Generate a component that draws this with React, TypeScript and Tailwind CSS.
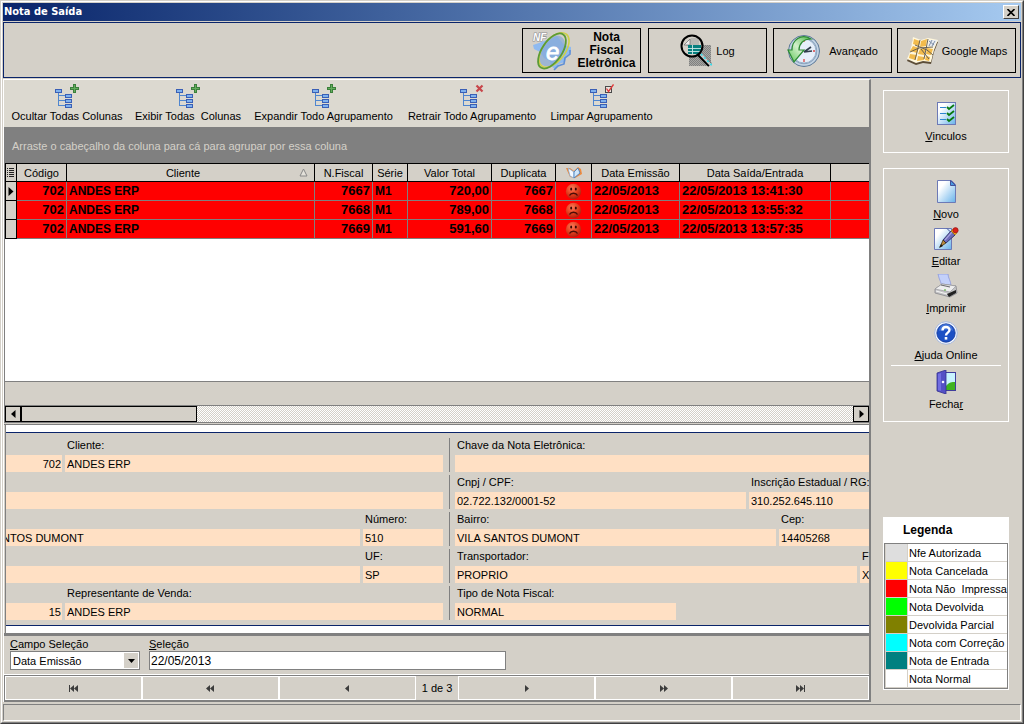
import React from "react";

const FONT = "font-['Liberation_Sans',Arial,sans-serif]";

function TreeIcon({ mark }: { mark: "plus" | "cross" | "check" }) {
  return (
    <svg width="24" height="24" viewBox="0 0 24 24" shapeRendering="crispEdges" aria-hidden="true">
      <path d="M3.500 8v14M3 11.500h7M3 16.500h7M3 21.500h7" stroke="#4f86cf" fill="none" />
      {[
        [0, 5],
        [10, 10],
        [10, 15],
        [10, 20],
      ].map(([x, y]) => (
        <g key={`${x}-${y}`}>
          <rect x={x} y={y} width="7" height="4" fill="#3a5fb5" />
          <rect x={x + 1} y={y + 1} width="5" height="2" fill="#7fb2ee" />
        </g>
      ))}
      {mark === "plus" && (
        <>
          <path d="M18 0h3v3h3v3h-3v3h-3v-3h-3v-3h3z" fill="#3b7f3b" />
          <path d="M19 1h1v3h3v1h-3v3h-1v-3h-3v-1h3z" fill="#63ad5c" />
        </>
      )}
      {mark === "cross" && (
        <path
          d="M16.500 1.500L22.500 7.500M22.500 1.500L16.500 7.500"
          stroke="#c8474b"
          strokeWidth="2.200"
          shapeRendering="auto"
        />
      )}
      {mark === "check" && (
        <>
          <rect x="15.500" y="2.500" width="6" height="6" fill="#e8e4dc" stroke="#4a4a4a" />
          <path d="M16.500 4.500l2 3L23.500 0.500" stroke="#e03a3a" strokeWidth="1.300" fill="none" shapeRendering="auto" />
        </>
      )}
    </svg>
  );
}

function NfeIcon() {
  return (
    <svg width="40" height="40" viewBox="0 0 40 40" aria-hidden="true">
      <path d="M1 14l6-2 5-2 5-2 8-3 4 5 3 4 7 2v5l-5 4-1 6-6 2-4 5-4-3-1-5-6-3-4-6-6-3z" fill="#8fbaf0" />
      <path d="M38 19v4l-5 4-1 6-6 2-4 4" fill="none" stroke="#5f8fd6" strokeWidth="1.600" />
      <ellipse cx="20" cy="20" rx="11" ry="17" transform="rotate(33 20 20)" fill="#86a9d6" opacity="0.700" />
      <ellipse cx="22" cy="19" rx="11" ry="20" transform="rotate(38 22 19)" fill="none" stroke="#cfd04a" strokeWidth="1.600" />
      <ellipse cx="20" cy="20" rx="10" ry="20" transform="rotate(34 20 20)" fill="none" stroke="#5c9b35" strokeWidth="1.800" />
      <text x="14" y="29" fontSize="24" fontStyle="italic" fill="#fff" stroke="#fff" strokeWidth="0.800" fontFamily="Liberation Sans, sans-serif">
        e
      </text>
      <text
        x="1"
        y="10"
        fontSize="10"
        fontStyle="italic"
        fontWeight="bold"
        fill="#fff"
        stroke="#8f8f93"
        strokeWidth="1.200"
        paintOrder="stroke"
        fontFamily="Liberation Sans, sans-serif"
      >
        NF
      </text>
    </svg>
  );
}

function LogIcon() {
  return (
    <svg width="32" height="33" viewBox="0 0 32 33" aria-hidden="true">
      <defs>
        <pattern id="log-dither" width="2" height="2" patternUnits="userSpaceOnUse">
          <rect width="2" height="2" fill="#a8a8a4" />
          <path d="M0 0h1v1h-1zM1 1h1v1h-1z" fill="#808080" />
        </pattern>
      </defs>
      <path d="M19 11h12v21H9V22h10z" fill="url(#log-dither)" />
      <circle cx="12" cy="12" r="10.500" fill="#d4d0c8" />
      <path d="M11 4h8v8H6z" fill="#b8b8b4" />
      <path d="M4 11l6-6v6z" fill="#eee" stroke="#777" strokeWidth="0.800" />
      <path d="M8 11h13v9H8z" fill="#067f7f" />
      <path d="M8 14.500h13M8 17.500h13M12.500 11v9" stroke="#c9e8e6" strokeWidth="0.900" />
      <circle cx="12" cy="12" r="10.500" fill="none" stroke="#000" strokeWidth="2" />
      <path d="M19 20l11 11" stroke="#000" strokeWidth="5" />
      <path d="M20.500 20l11 11.500" stroke="#c8c8c8" strokeWidth="2.800" />
      <path d="M21 20l11 11.500" stroke="#2fdcea" strokeWidth="1.600" strokeDasharray="2 2.500" />
    </svg>
  );
}

function HistoryIcon() {
  return (
    <svg width="34" height="34" viewBox="0 0 34 34" aria-hidden="true">
      <defs>
        <linearGradient id="clock-arrow" x1="1" y1="0" x2="0" y2="1">
          <stop offset="0" stopColor="#4bb845" />
          <stop offset="0.500" stopColor="#d2f0cb" />
          <stop offset="1" stopColor="#5cc455" />
        </linearGradient>
      </defs>
      <circle cx="17" cy="17" r="15.500" fill="#8ba3bd" stroke="#5f7a98" />
      <circle cx="17" cy="17" r="14" fill="none" stroke="#c4d5e6" strokeWidth="1.500" />
      <circle cx="17" cy="17" r="12" fill="#e6effa" stroke="#9db4cc" />
      <path d="M17 18l7-5M17 18l8-1" stroke="#2f3d4c" strokeWidth="1.700" />
      <path d="M17 6v2M28 17h-2M17 28v-3" stroke="#d44" strokeWidth="1.300" />
      <path d="M24 5C14-1 5 6 5 16H1l6 12 10-12h-5c0-6 4-11 12-11z" fill="url(#clock-arrow)" stroke="#2c8a34" strokeWidth="1.200" />
    </svg>
  );
}

function MapIcon() {
  return (
    <svg width="33" height="28" viewBox="0 0 33 28" aria-hidden="true">
      <path d="M7 2l8 3 7-2 10 2-4 10-3 12-8-1-7 2-9-4 3-7z" fill="#5c4d38" />
      <path d="M7 0l8 3 7-2 10 2-4 10-3 12-8-1-7 2-9-4 3-7z" fill="#fff7dc" />
      <path
        d="M8 2l6 2-1 5-6-2zM7 9l6 2-2 5-7-2zM15 4l6-2-1 7-6 1zM14 12l6-1-2 7-6-1zM4 17l7 1-2 5-6-2zM21 11l6 1-2 6-5-1zM12 19l6 1v3l-7 1zM20 19l4 1-1 4-4-1z"
        fill="#f2bb4c"
      />
      <path d="M23 3h8l-3 7-6-1z" fill="#e8ecf2" />
      <path d="M9 8l12 5 6 5M14 3l-5 20M22 2l-4 20M4 15l9-4 14-1M15 12l8 10" stroke="#5b5548" strokeWidth="0.900" fill="none" />
      <path d="M23 4l5 4M26 3l-3 6M29 4l-3 5" stroke="#7788a0" strokeWidth="0.900" />
    </svg>
  );
}

function SheetDefs() {
  return (
    <linearGradient id="sheet" x1="0" y1="0" x2="1" y2="1">
      <stop offset="0.250" stopColor="#fff" />
      <stop offset="1" stopColor="#67b2ea" />
    </linearGradient>
  );
}

function LinksIcon() {
  return (
    <svg width="24" height="24" viewBox="0 0 24 24" aria-hidden="true">
      <defs>
        <SheetDefs />
      </defs>
      <rect x="3.500" y="0.500" width="18" height="22" fill="url(#sheet)" stroke="#6c79b6" />
      <path d="M6 5.500h6M6 11.500h6M6 17.500h6" stroke="#2d86d0" />
      <path d="M13 5l2 2 5-4M13 11l2 2 5-4M13 17l2 2 5-4" fill="none" stroke="#087a10" strokeWidth="1.800" />
    </svg>
  );
}

function NewIcon() {
  return (
    <svg width="24" height="24" viewBox="0 0 24 24" aria-hidden="true">
      <path d="M3.500 0.500h14l4 4v18h-18z" fill="url(#sheet)" stroke="#6c79b6" />
      <path d="M16.500 0.500l5 5h-5z" fill="#4a9ae0" stroke="#44529b" />
    </svg>
  );
}

function EditIcon() {
  return (
    <svg width="26" height="24" viewBox="0 0 26 24" aria-hidden="true">
      <path d="M1.500 1.500h17v21h-17z" fill="url(#sheet)" stroke="#6c79b6" />
      <path d="M14 1.500l4 4" stroke="#44529b" />
      <path d="M10 13l8-9 4 4-9 8z" fill="#6d6ab8" stroke="#35356e" />
      <path d="M12 13l7-8" stroke="#a5a3e0" strokeWidth="1.200" />
      <path d="M10 13l3 3-6 4z" fill="#b9893c" stroke="#2d220f" strokeWidth="0.700" />
      <path d="M6 21l2-4 2 2z" fill="#221a0c" />
      <path d="M18 4l2-2 4 4-2 2z" fill="#f5b51d" stroke="#9a6a10" strokeWidth="0.600" />
      <circle cx="22.500" cy="3.300" r="2.700" fill="#d9201a" stroke="#8e1410" strokeWidth="0.600" />
    </svg>
  );
}

function PrintIcon() {
  return (
    <svg width="24" height="24" viewBox="0 0 24 24" aria-hidden="true">
      <path d="M4 0h10c0 4 3 7 3 12l-9 2c0-5-3-8-4-14z" fill="#c3d0fa" stroke="#8b98dc" strokeWidth="0.800" />
      <path d="M1 15l7-5 14 2 1 7-7 4-15-4z" fill="#c4c4c6" stroke="#85858a" strokeWidth="0.800" />
      <path d="M1 15l7-5 14 2-6 6z" fill="#ededee" stroke="#909094" strokeWidth="0.600" />
      <path d="M7 11l9 2" stroke="#6b6b70" strokeWidth="1.200" />
      <path d="M13 20l9-4v3l-7 4z" fill="#222" />
      <path d="M2 17l11 3" stroke="#f5f5f5" />
      <path d="M10 16h2" stroke="#4fae35" strokeWidth="1.200" />
    </svg>
  );
}

function HelpIcon() {
  return (
    <svg width="24" height="24" viewBox="0 0 24 24" aria-hidden="true">
      <circle cx="12" cy="12" r="11.300" fill="#f3f7ff" stroke="#a7b8da" />
      <circle cx="12" cy="12" r="9.200" fill="#1c50c4" stroke="#12399b" strokeWidth="0.800" />
      <path d="M5 10a7 7 0 0 1 14 0c-4-2-9-1-14 0z" fill="#5c8ae6" opacity="0.600" />
      <path d="M8.500 9.500c0-4.500 7-4.500 7-0.500 0 2.700-3.500 2.500-3.500 5.500" fill="none" stroke="#fff" strokeWidth="2.400" />
      <rect x="10.700" y="16" width="2.600" height="2.600" fill="#fff" />
    </svg>
  );
}

function DoorIcon() {
  return (
    <svg width="24" height="24" viewBox="0 0 24 24" aria-hidden="true">
      <rect x="10.500" y="2.500" width="11" height="18" fill="#c8f3ff" stroke="#3f3d9c" />
      <path d="M12 16c3-4 6-4 9-4v8h-9z" fill="#3fb321" />
      <path d="M3 3l9-3v24l-9-3z" fill="#5450c6" stroke="#343091" strokeWidth="0.800" />
      <path d="M4 4l3-1v18l-3-1z" fill="#716de0" />
      <circle cx="9" cy="12" r="1.300" fill="#f2f2ff" />
    </svg>
  );
}

function BookIcon() {
  return (
    <svg className="mx-auto block" width="18" height="13" viewBox="0 0 18 13" role="img" aria-label="Impressa">
      <path d="M1 2h4l4 3 4-4 3 2 1 5-7 4-5-1z" fill="#f08a3c" />
      <path d="M3 2l6 4v6l-4-2z" fill="#f4f9ff" stroke="#79a9d8" strokeWidth="0.700" />
      <path d="M9 6l4-4 2 5-6 5z" fill="#cfe6fa" stroke="#4a82c0" strokeWidth="0.900" />
    </svg>
  );
}

function SadIcon() {
  return (
    <svg className="mx-auto block" width="17" height="17" viewBox="0 0 17 17" role="img" aria-label="Não impressa">
      <defs>
        <radialGradient id="sad" cx="0.400" cy="0.300" r="0.700">
          <stop offset="0" stopColor="#ff7a58" />
          <stop offset="0.600" stopColor="#e03c1c" />
          <stop offset="1" stopColor="#b02010" />
        </radialGradient>
      </defs>
      <circle cx="8.500" cy="8.500" r="7.700" fill="url(#sad)" />
      <ellipse cx="6.200" cy="6" rx="1" ry="1.500" fill="#3a0804" />
      <ellipse cx="10.800" cy="6" rx="1" ry="1.500" fill="#3a0804" />
      <path d="M4.500 12.500c1.500-3 6.500-3 8 0" fill="none" stroke="#4a0c06" strokeWidth="1.400" />
    </svg>
  );
}

/* Text with its access key underlined */
function Access({ text, at }: { text: string; at: number }) {
  return (
    <span className="whitespace-nowrap">
      {text.slice(0, at)}
      <u className="underline-offset-1">{text[at]}</u>
      {text.slice(at + 1)}
    </span>
  );
}

function ModuleButton({ icon, children, className = "" }: { icon: React.ReactNode; children: React.ReactNode; className?: string }) {
  return (
    <button type="button" className={`flex h-[45px] w-[119px] items-center justify-center border border-black ${className}`}>
      {icon}
      {children}
    </button>
  );
}

function ToolButton({ mark, children, width }: { mark: "plus" | "cross" | "check"; children: string; width: string }) {
  return (
    <button type="button" className={`flex flex-col items-center pt-1 ${width}`}>
      <TreeIcon mark={mark} />
      <span className="whitespace-pre leading-4">{children}</span>
    </button>
  );
}

function SideButton({ icon, text, at }: { icon: React.ReactNode; text: string; at: number }) {
  return (
    <button type="button" className="flex h-[43px] w-full flex-col items-center gap-0.5">
      {icon}
      <span className="leading-4">
        <Access text={text} at={at} />
      </span>
    </button>
  );
}

type FieldProps = { label?: string; name: string; value?: string; className: string; align?: string };

function Field({ label, name, value = "", className, align = "px-0.5" }: FieldProps) {
  return (
    <div className={`flex min-w-0 flex-col ${className}`}>
      <label htmlFor={name} className="h-[17px] overflow-hidden pl-0.5 leading-[14px] whitespace-nowrap">
        {label}
      </label>
      <input
        id={name}
        aria-label={label ?? name}
        readOnly
        defaultValue={value}
        className={`h-[17px] w-full min-w-0 bg-[#ffe0c4] outline-none ${align}`}
      />
    </div>
  );
}

function FormRow({ left, right }: { left: React.ReactNode; right: React.ReactNode }) {
  return (
    <div className="grid grid-cols-[437fr_420fr] gap-1.5">
      <div className="flex min-w-0 gap-[3px]">{left}</div>
      <div className="flex min-w-0 gap-[3px] overflow-hidden border-l border-[#808080] pl-[5px]">{right}</div>
    </div>
  );
}

const NAV_PATHS: Record<string, string> = {
  first: "M1 1h1v7H1zM6 1v7L2 4.500zM10 1v7L6 4.500z",
  back: "M5 1v7L1 4.500zM9 1v7L5 4.500z",
  prev: "M7 1v7L3 4.500z",
  next: "M4 1v7l4-3.500z",
  forward: "M2 1v7l4-3.500zM6 1v7l4-3.500z",
  last: "M1 1v7l4-3.500zM5 1v7l4-3.500zM9 1h1v7H9z",
};

function NavButton({ kind, label }: { kind: string; label: string }) {
  return (
    <button type="button" aria-label={label} className="flex flex-1 items-center justify-center border border-white bg-[#d4d0c8]">
      <svg width="11" height="9" viewBox="0 0 11 9" aria-hidden="true">
        <path d={NAV_PATHS[kind]} fill="#3c3c3c" />
      </svg>
    </button>
  );
}

const ROWS = [
  { fiscal: "7667", total: "720,00", out: "22/05/2013 13:41:30" },
  { fiscal: "7668", total: "789,00", out: "22/05/2013 13:55:32" },
  { fiscal: "7669", total: "591,60", out: "22/05/2013 13:57:35" },
];

const LEGEND = [
  { color: "bg-[#dedede]", text: "Nfe Autorizada" },
  { color: "bg-[#ffff00]", text: "Nota Cancelada" },
  { color: "bg-[#ff0000]", text: "Nota Não  Impressa" },
  { color: "bg-[#00ff00]", text: "Nota Devolvida" },
  { color: "bg-[#808000]", text: "Devolvida Parcial" },
  { color: "bg-[#00ffff]", text: "Nota com Correção" },
  { color: "bg-[#008080]", text: "Nota de Entrada" },
  { color: "bg-white", text: "Nota Normal" },
];

const TH = "border-r border-black p-0 font-normal whitespace-nowrap";
const TD = "border-r border-b border-[#808080] px-0.5 py-0 whitespace-nowrap";

function NotesTable() {
  return (
    <table className="w-full table-fixed border-separate border-spacing-0">
      <colgroup>
        <col className="w-[12px]" />
        <col className="w-[50px]" />
        <col className="w-[248px]" />
        <col className="w-[58px]" />
        <col className="w-[35px]" />
        <col className="w-[84px]" />
        <col className="w-[64px]" />
        <col className="w-[36px]" />
        <col className="w-[88px]" />
        <col className="w-[151px]" />
        <col />
      </colgroup>
      <thead>
        <tr className="h-[19px] bg-[#d4d0c8] [&>th]:border-y [&>th]:border-black">
          <th className={`${TH} border-l`}>
            <svg className="mx-auto block" width="8" height="9" viewBox="0 0 8 9" shapeRendering="crispEdges" aria-label="Colunas" role="img">
              <path d="M0 .5h1M2 .5h5M0 2.500h1M2 2.500h5M0 4.500h1M2 4.500h5M0 6.500h1M2 6.500h5M0 8.500h1M2 8.500h5" stroke="#222" />
            </svg>
          </th>
          <th className={TH}>Código</th>
          <th className={TH}>
            <div className="flex items-center justify-center">
              <span className="flex-1">Cliente</span>
              <svg className="mr-1.5" width="9" height="9" viewBox="0 0 9 9" aria-hidden="true">
                <path d="M4.500 1L8 8H1z" fill="#e4e1da" stroke="#888" />
              </svg>
            </div>
          </th>
          <th className={TH}>N.Fiscal</th>
          <th className={TH}>Série</th>
          <th className={TH}>Valor Total</th>
          <th className={TH}>Duplicata</th>
          <th className={TH}>
            <BookIcon />
          </th>
          <th className={TH}>Data Emissão</th>
          <th className={TH}>Data Saída/Entrada</th>
          <th className="p-0" aria-label="Outros" />
        </tr>
      </thead>
      <tbody>
        {ROWS.map((r, i) => (
          <tr key={r.fiscal} className="h-[19px] bg-[#ff0000] text-[13px] leading-4 font-bold">
            <td className="border-x border-b border-black bg-[#d4d0c8] p-0">
              {i === 0 && (
                <svg className="mx-auto block" width="6" height="9" viewBox="0 0 6 9" role="img" aria-label="Linha atual">
                  <path d="M0.500 0v9L5.500 4.500z" fill="#000" />
                </svg>
              )}
            </td>
            <td className={`${TD} text-right`}>702</td>
            <td className={`${TD} text-xs`}>ANDES ERP</td>
            <td className={`${TD} text-right`}>{r.fiscal}</td>
            <td className={`${TD} text-xs`}>M1</td>
            <td className={`${TD} text-right`}>{r.total}</td>
            <td className={`${TD} text-right`}>{r.fiscal}</td>
            <td className={TD}>
              <SadIcon />
            </td>
            <td className={TD}>22/05/2013</td>
            <td className={TD}>{r.out}</td>
            <td className="border-b border-[#808080] p-0" />
          </tr>
        ))}
      </tbody>
    </table>
  );
}

function DetailForm() {
  return (
    <section className="border-l border-[#808080] bg-white py-[7px]">
      <div className="flex flex-col gap-[3px] border-y border-[#0a246a] bg-[#d4d0c8] py-[5px]">
        <FormRow
          left={
            <>
              <Field name="codigo" value="702" className="w-[56px]" align="text-right pr-px" />
              <Field name="cliente" label="Cliente:" value="ANDES ERP" className="flex-1" />
            </>
          }
          right={<Field name="chave" label="Chave da Nota Eletrônica:" className="flex-1" />}
        />
        <FormRow
          left={<Field name="fantasia" className="flex-1" />}
          right={
            <>
              <Field name="cnpj" label="Cnpj / CPF:" value="02.722.132/0001-52" className="flex-1" />
              <Field name="inscricao" label="Inscrição Estadual / RG:" value="310.252.645.110" className="w-[120px]" />
            </>
          }
        />
        <FormRow
          left={
            <>
              <Field name="endereco" value="NTOS DUMONT" className="flex-1" align="-indent-1" />
              <Field name="numero" label="Número:" value="510" className="w-[80px]" />
            </>
          }
          right={
            <>
              <Field name="bairro" label="Bairro:" value="VILA SANTOS DUMONT" className="flex-1" />
              <Field name="cep" label="Cep:" value="14405268" className="w-[90px]" />
            </>
          }
        />
        <FormRow
          left={
            <>
              <Field name="cidade" className="flex-1" />
              <Field name="uf" label="UF:" value="SP" className="w-[80px]" />
            </>
          }
          right={
            <>
              <Field name="transportador" label="Transportador:" value="PROPRIO" className="flex-1" />
              <Field name="placa" label="F" value="X" className="w-[9px]" align="pl-0.5" />
            </>
          }
        />
        <FormRow
          left={
            <>
              <Field name="cod-representante" value="15" className="w-[56px]" align="text-right pr-px" />
              <Field name="representante" label="Representante de Venda:" value="ANDES ERP" className="flex-1" />
            </>
          }
          right={<Field name="tipo" label="Tipo de Nota Fiscal:" value="NORMAL" className="w-[221px]" />}
        />
      </div>
    </section>
  );
}

export default function App() {
  return (
    <div
      className={`flex min-h-screen border border-[#d4d0c8] border-r-[#404040] border-b-[#404040] bg-[#d4d0c8] text-[11px] leading-[14px] text-black ${FONT}`}
    >
      <div className="flex min-w-0 flex-1 flex-col border border-white border-r-[#808080] border-b-[#808080] p-px">
        <header className="flex h-[18px] items-center justify-between bg-linear-to-r from-[#0a246a] to-[#a6caf0] pr-0.5 pl-px">
          <h1 className="font-['DejaVu_Sans_Condensed','DejaVu_Sans',sans-serif] text-[11px] font-bold text-white">Nota de Saída</h1>
          <button
            type="button"
            aria-label="Fechar janela"
            className="flex h-[14px] w-4 items-center justify-center border border-white border-r-[#404040] border-b-[#404040] bg-[#d4d0c8]"
          >
            <svg width="8" height="7" viewBox="0 0 8 7" aria-hidden="true">
              <path d="M0.500 0l7 7M7.500 0l-7 7" stroke="#000" strokeWidth="1.600" />
            </svg>
          </button>
        </header>

        <nav className="mt-px flex h-[56px] justify-end border border-[#0a246a] pt-[5px] pr-1">
          <ModuleButton icon={<NfeIcon />} className="mr-[7px] gap-1 pl-1.5">
            <span className="w-[62px] text-center text-xs leading-[13px] font-bold">Nota Fiscal Eletrônica</span>
          </ModuleButton>
          <ModuleButton icon={<LogIcon />} className="mr-1.5 gap-1">
            Log
          </ModuleButton>
          <ModuleButton icon={<HistoryIcon />} className="mr-[5px] gap-2">
            Avançado
          </ModuleButton>
          <ModuleButton icon={<MapIcon />} className="gap-[3px] whitespace-nowrap">
            Google Maps
          </ModuleButton>
        </nav>

        <div className="mt-px flex flex-1">
          <main className="flex min-w-0 flex-1 flex-col border-t border-r-2 border-l border-white border-r-[#808080]">
            <div className="flex h-[47px] items-start bg-[#dcd9d0]">
              <ToolButton mark="plus" width="w-[126px]">Ocultar Todas Colunas</ToolButton>
              <ToolButton mark="plus" width="w-[116px]">{"Exibir Todas  Colunas"}</ToolButton>
              <ToolButton mark="plus" width="w-[155px]">Expandir Todo Agrupamento</ToolButton>
              <ToolButton mark="cross" width="w-[142px]">Retrair Todo Agrupamento</ToolButton>
              <ToolButton mark="check" width="w-[117px]">Limpar Agrupamento</ToolButton>
            </div>
            <p className="flex h-[36px] items-center bg-[#808080] px-2 pt-0.5 text-[#d4d0c8]">
              Arraste o cabeçalho da coluna para cá para agrupar por essa coluna
            </p>
            <div className="flex-1 border-l border-[#808080] bg-white">
              <NotesTable />
            </div>
            <div className="h-[24px] border-t border-l border-[#808080]" />
            <div className="flex h-[18px] border-y border-l border-[#808080] bg-[repeating-conic-gradient(#fff_0_25%,#d4d0c8_0_50%)] bg-[size:2px_2px]">
              <button type="button" aria-label="Rolar para a esquerda" className="flex w-4 items-center justify-center border border-black bg-[#d4d0c8]">
                <svg width="5" height="8" viewBox="0 0 5 8" aria-hidden="true">
                  <path d="M4.500 0v8L0 4z" />
                </svg>
              </button>
              <div className="w-[176px] border border-black bg-[#d4d0c8]" />
              <button type="button" aria-label="Rolar para a direita" className="ml-auto flex w-4 items-center justify-center border border-black bg-[#d4d0c8]">
                <svg width="5" height="8" viewBox="0 0 5 8" aria-hidden="true">
                  <path d="M0.500 0v8L5 4z" />
                </svg>
              </button>
            </div>
            <div className="mt-px border-t border-b-[3px] border-[#808080] pl-px">
              <DetailForm />
            </div>
            <form className="flex h-[39px] gap-[9px] pt-px pl-1.5" onSubmit={(e) => e.preventDefault()}>
              <div className="w-[130px]">
                <label htmlFor="campo" className="block">
                  <Access text="Campo Seleção" at={0} />
                </label>
                <div className="relative">
                  <select id="campo" className="block h-[19px] w-full appearance-none border border-[#808080] bg-white pr-4 pl-0.5">
                    <option>Data Emissão</option>
                  </select>
                  <span className="pointer-events-none absolute top-0.5 right-0.5 flex h-[15px] w-[14px] items-center justify-center bg-[#d4d0c8]">
                    <svg width="7" height="4" viewBox="0 0 7 4" aria-hidden="true">
                      <path d="M0 0h7L3.500 4z" />
                    </svg>
                  </span>
                </div>
              </div>
              <div className="w-[357px]">
                <label htmlFor="selecao" className="block">
                  <Access text="Seleção" at={0} />
                </label>
                <input id="selecao" defaultValue="22/05/2013" className="block h-[19px] w-full border border-[#808080] bg-white px-px text-xs" />
              </div>
            </form>
            <div className="flex h-[27px] border-t border-b-2 border-l border-[#808080] shadow-[0_-1px_0_#fff]">
              <NavButton kind="first" label="Primeiro" />
              <NavButton kind="back" label="Página anterior" />
              <NavButton kind="prev" label="Anterior" />
              <span className="w-[42px] self-center text-center">1 de 3</span>
              <NavButton kind="next" label="Próximo" />
              <NavButton kind="forward" label="Próxima página" />
              <NavButton kind="last" label="Último" />
            </div>
          </main>

          <aside className="flex w-[150px] flex-col px-3 pt-[11px]">
            <div className="border border-white pt-[11px] pb-[7px]">
              <SideButton icon={<LinksIcon />} text="Vinculos" at={0} />
            </div>
            <div className="mt-[15px] flex flex-col gap-1 border border-white px-[7px] pt-[11px] pb-2">
              <SideButton icon={<NewIcon />} text="Novo" at={0} />
              <SideButton icon={<EditIcon />} text="Editar" at={0} />
              <SideButton icon={<PrintIcon />} text="Imprimir" at={0} />
              <SideButton icon={<HelpIcon />} text="Ajuda Online" at={0} />
              <div className="-mt-[3px] border-t border-white pt-1">
                <SideButton icon={<DoorIcon />} text="Fechar" at={5} />
              </div>
            </div>

            <section className="mt-auto mb-3 bg-white p-px">
              <h2 className="h-[25px] pt-1 pl-[19px] text-xs leading-4 font-bold">Legenda</h2>
              <table className="w-full table-fixed border-separate border-spacing-0 border border-[#808080]">
                <tbody>
                  {LEGEND.map((l) => (
                    <tr key={l.text} className="h-[18px]">
                      <td className={`w-[23px] border-r border-b border-l border-[#d4d0c8] p-0 ${l.color}`} />
                      <td className="border-b border-[#d4d0c8] py-0 pr-0 pl-px whitespace-pre">{l.text}</td>
                    </tr>
                  ))}
                </tbody>
              </table>
            </section>
          </aside>
        </div>

        <footer className="mt-0.5 h-[17px] border border-[#808080] border-r-white border-b-white" />
      </div>
    </div>
  );
}
